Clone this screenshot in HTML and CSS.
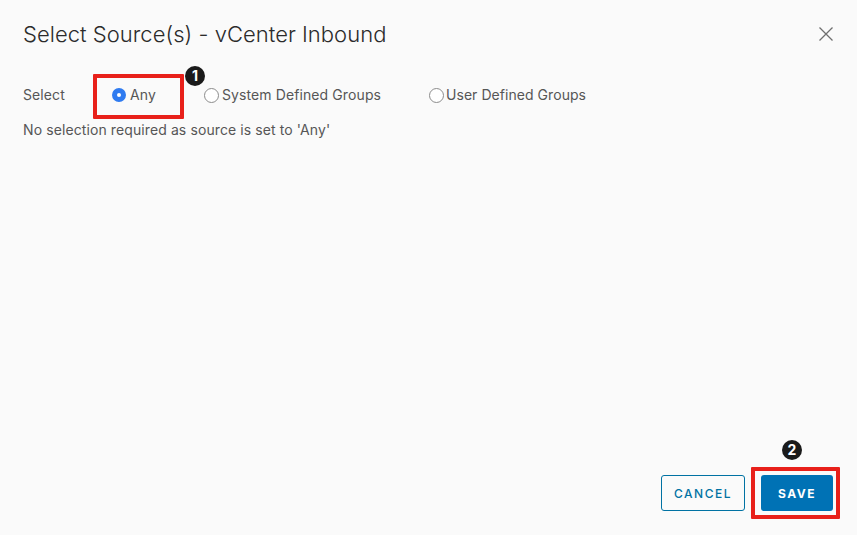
FILE: index.html
```html
<!DOCTYPE html>
<html lang="en">
<head>
<meta charset="utf-8">
<title>Select Source(s) - vCenter Inbound</title>
<link rel="stylesheet" href="styles.css">
</head>
<body>
<div class="dialog">
  <header class="head">
    <h1 class="title">Select Source(s) - vCenter Inbound</h1>
    <svg class="close" width="16" height="16" viewBox="0 0 16 16"><path d="M1.5 1.5L14.5 14.5M14.5 1.5L1.5 14.5" stroke="#6f6f6f" stroke-width="1.3" fill="none"/></svg>
  </header>
  <div class="select-row">
    <span class="select-label">Select</span>
    <label class="opt opt-any"><span class="radio radio-on"></span>Any</label>
    <label class="opt opt-sys"><span class="radio"></span>System Defined Groups</label>
    <label class="opt opt-user"><span class="radio"></span>User Defined Groups</label>
  </div>
  <p class="note">No selection required as source is set to 'Any'</p>
  <footer class="foot">
    <button class="btn btn-outline">CANCEL</button>
    <button class="btn btn-solid">SAVE</button>
  </footer>
  <div class="mark mark-any"></div>
  <div class="mark mark-save"></div>
  <div class="badge badge-1">1</div>
  <div class="badge badge-2">2</div>
</div>
</body>
</html>
```
FILE: styles.css
```css
* { box-sizing: border-box; }
html, body { margin: 0; height: 100%; background: #fff; }
body { font-family: Inter, "Liberation Sans", sans-serif; }
.dialog { position: relative; width: 857px; height: 535px; background: #fafafa; padding: 0 24px 0 23px; display: flex; flex-direction: column; }
.head { display: flex; justify-content: space-between; align-items: center; height: 34px; margin-top: 17px; }
.title { margin: 0; font-size: 22px; font-weight: 300; color: #2b2b2b; letter-spacing: 0.03px; }
.close { margin-right: -1px; }
.select-row { display: flex; align-items: center; height: 20px; margin-top: 33px; font-size: 14px; color: #565656; letter-spacing: 0.1px; }
.select-label { width: 89px; }
.opt { display: flex; align-items: center; gap: 3px; }
.opt-any { width: 92px; gap: 4px; }
.opt-sys { width: 225px; }
.opt-user { gap: 2px; letter-spacing: 0.05px; }
.radio { width: 15px; height: 15px; margin-top: 2px; border-radius: 50%; background: #fff; border: 1px solid #8c8c8c; }
.radio-on { background: #fff; border: 5px solid #2f7bf0; width: 14px; height: 14px; }
.note { margin: 16px 0 0; font-size: 14px; line-height: 20px; color: #565656; letter-spacing: 0.1px; }
.foot { margin-top: auto; margin-bottom: 24px; display: flex; justify-content: flex-end; gap: 16px; }
.btn { height: 36px; border-radius: 3px; font-family: inherit; font-size: 12px; letter-spacing: 1.5px; padding: 0; }
.btn-outline { width: 84px; background: transparent; border: 1px solid #0072a3; color: #0072a3; font-weight: 500; }
.btn-solid { width: 72px; background: #0072b5; border: 0; color: #fff; font-weight: 700; }
.mark { position: absolute; border: 4px solid #e8201a; border-radius: 1px; }
.mark-any { left: 93px; top: 74px; width: 91px; height: 45px; }
.mark-save { left: 751px; top: 467px; width: 89px; height: 52px; }
.badge { position: absolute; width: 20px; height: 20px; border-radius: 50%; background: #1a1a1a; color: #fff; font-size: 14px; font-weight: 700; line-height: 20px; text-align: center; }
.badge-1 { left: 185px; top: 66px; }
.badge-2 { left: 782px; top: 440px; }
```
